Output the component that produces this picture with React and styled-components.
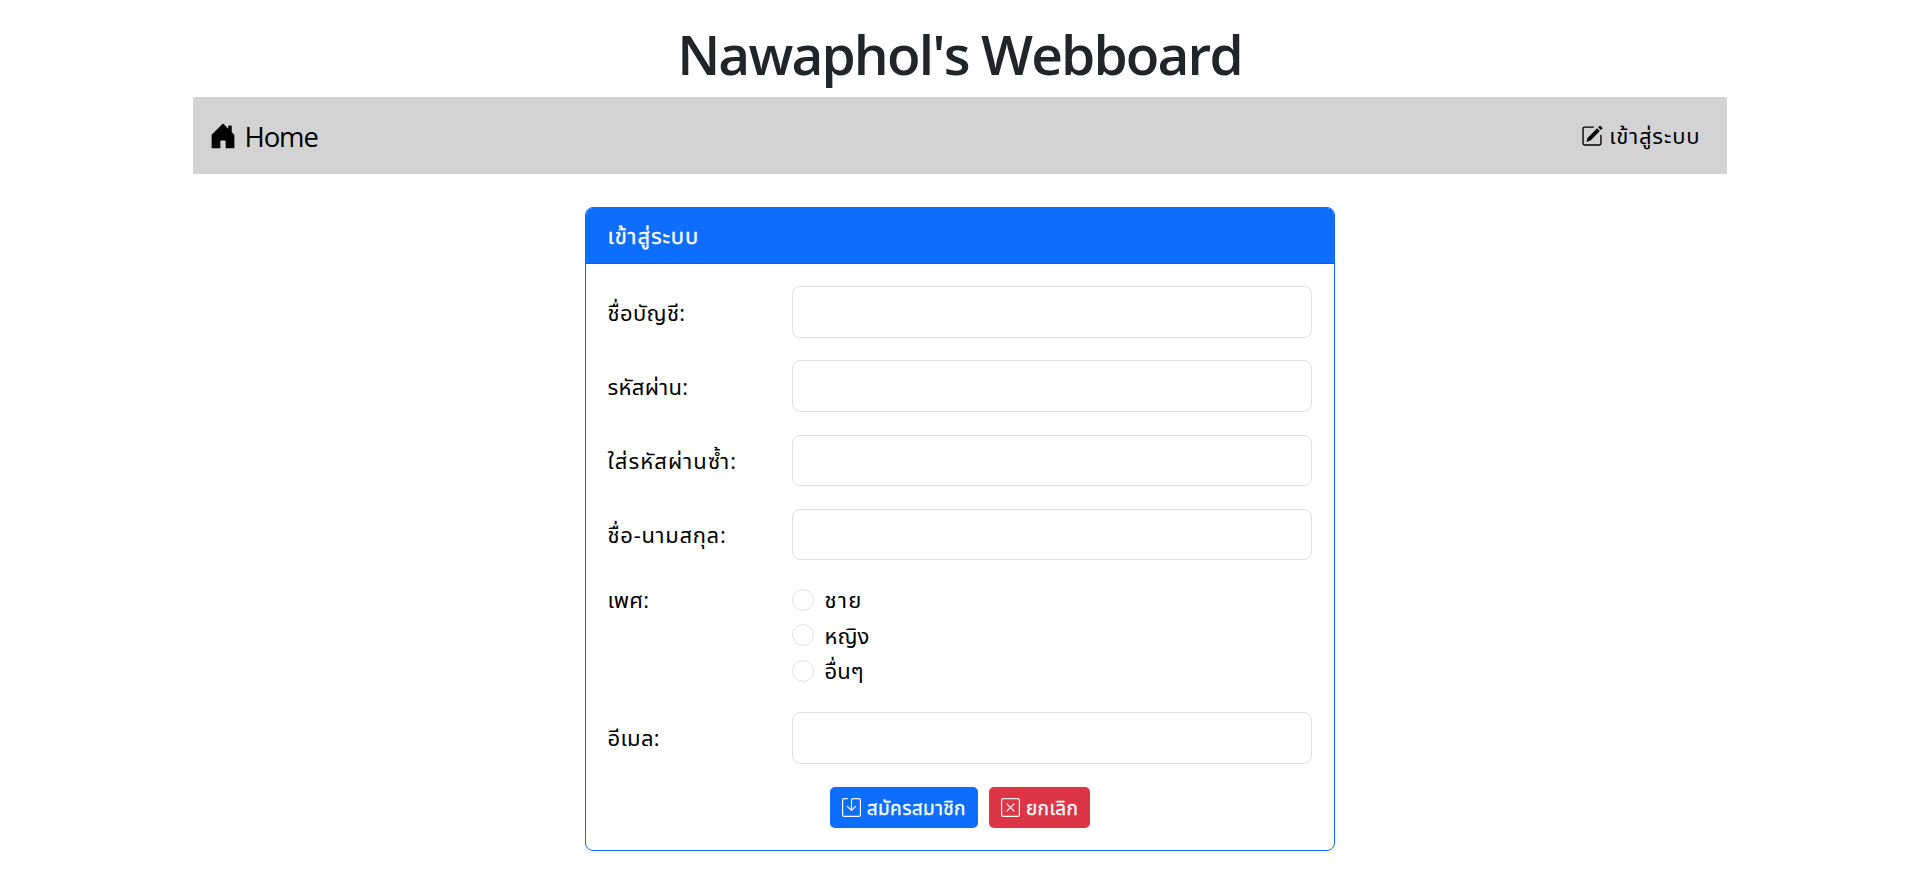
import React from 'react';
import styled, { createGlobalStyle } from 'styled-components';
import { BsHouseDoorFill, BsPencilSquare, BsSave, BsXSquare } from 'react-icons/bs';

const font = '"Open Sans", "Noto Sans", "Liberation Sans", "Noto Sans Thai", sans-serif';

const Global = createGlobalStyle`
  *, *::before, *::after { box-sizing: border-box; }
  body { margin: 0; background: #fff; color: #000; font-family: ${font}; font-size: 22px; line-height: 1.5; }
`;
const Page = styled.div`width: 1534px; margin: 0 auto; padding-top: 22px;`;
const Title = styled.h1`
  margin: 0 0 8px; height: 67px; line-height: 63px; text-align: center;
  font-size: 55px; font-weight: 600; letter-spacing: -1.85px; color: #212529; white-space: nowrap;
`;
const Navbar = styled.nav`
  display: flex; justify-content: space-between; align-items: center;
  height: 77px; padding: 0 26px 0 16px; background: #d3d3d3;
`;
const NavLink = styled.a`
  display: flex; align-items: center; gap: ${(p) => p.$gap}px; white-space: nowrap;
  font-size: ${(p) => p.$size}px; letter-spacing: ${(p) => p.$spacing}px; color: #000;
`;
const NavText = styled.span`padding-top: ${(p) => p.$drop || 0}px;`;
const Card = styled.section`
  width: 750px; height: 644px; margin: 33px auto 0; border: 1px solid #0d6efd;
  border-radius: 8px; overflow: hidden;
`;
const CardHeader = styled.header`
  height: 56px; padding: 0 22px; line-height: 54px; background: #0d6efd; color: #fff;
  border-bottom: 1px solid #0b5ed7; letter-spacing: 0.9px; -webkit-text-stroke: 0.3px #fff;
`;
const Form = styled.form`padding: 22px;`;
const Row = styled.div`display: flex; align-items: center; height: 52px; margin-bottom: 22.3px;`;
const Label = styled.label`width: 184px; white-space: nowrap; letter-spacing: ${(p) => p.$spacing}px;`;
const Input = styled.input`
  flex: 1; height: ${(p) => p.$height}px; border: 1px solid #dee2e6; border-radius: 8px;
  padding: 8px 16px; font: inherit; align-self: flex-start;
`;
const RadioRow = styled.div`display: flex; margin-bottom: 22px;`;
const Options = styled.div`display: grid; grid-auto-rows: 35.6px;`;
const Option = styled.label`
  display: flex; align-items: center; gap: 11px; height: 33px; letter-spacing: ${(p) => p.$spacing}px;
`;
const Radio = styled.input`
  appearance: none; margin: 0; width: 22px; height: 22px; border: 1px solid #dee2e6; border-radius: 50%;
`;
const Actions = styled.div`display: flex; justify-content: center; gap: 11px; padding: 1px 0 0 1px;`;
const Button = styled.button`
  display: flex; align-items: center; gap: 6px; height: 41px; padding: 0 12px; border: 0;
  border-radius: 5px; background: ${(p) => p.$color}; color: #fff; font: 19px ${font};
  letter-spacing: 0.4px; white-space: nowrap;
`;
const ButtonText = styled.span`padding-top: 4px; -webkit-text-stroke: 0.3px #fff;`;

const Field = ({ label, spacing, height = 52, type = 'text' }) => (
  <Row><Label $spacing={spacing}>{label}</Label><Input type={type} $height={height} /></Row>
);

const genders = [
  { label: 'ชาย', spacing: 1.3 },
  { label: 'หญิง', spacing: 0 },
  { label: 'อื่นๆ', spacing: 0 },
];

export default function App() {
  return (
    <Page>
      <Global />
      <Title>Nawaphol's Webboard</Title>
      <Navbar>
        <NavLink $size={27.5} $spacing={-1.1} $gap={8}><BsHouseDoorFill size={28} /><NavText $drop={2}>Home</NavText></NavLink>
        <NavLink $size={22} $spacing={0.85} $gap={6}><BsPencilSquare size={22} /><NavText>เข้าสู่ระบบ</NavText></NavLink>
      </Navbar>
      <Card>
        <CardHeader>เข้าสู่ระบบ</CardHeader>
        <Form>
          <Field label="ชื่อบัญชี:" spacing={0.35} />
          <Field label="รหัสผ่าน:" spacing={0.3} type="password" />
          <Field label="ใส่รหัสผ่านซ้ำ:" spacing={1.1} height={51} type="password" />
          <Field label="ชื่อ-นามสกุล:" spacing={0.7} height={51} />
          <RadioRow>
            <Label $spacing={0.2}>เพศ:</Label>
            <Options>
              {genders.map(({ label, spacing }) => (
                <Option key={label} $spacing={spacing}><Radio type="radio" name="gender" />{label}</Option>
              ))}
            </Options>
          </RadioRow>
          <Field label="อีเมล:" spacing={0.25} type="email" />
          <Actions>
            <Button type="button" $color="#0d6efd"><BsSave size={19} /><ButtonText>สมัครสมาชิก</ButtonText></Button>
            <Button type="button" $color="#dc3545"><BsXSquare size={19} /><ButtonText>ยกเลิก</ButtonText></Button>
          </Actions>
        </Form>
      </Card>
    </Page>
  );
}
